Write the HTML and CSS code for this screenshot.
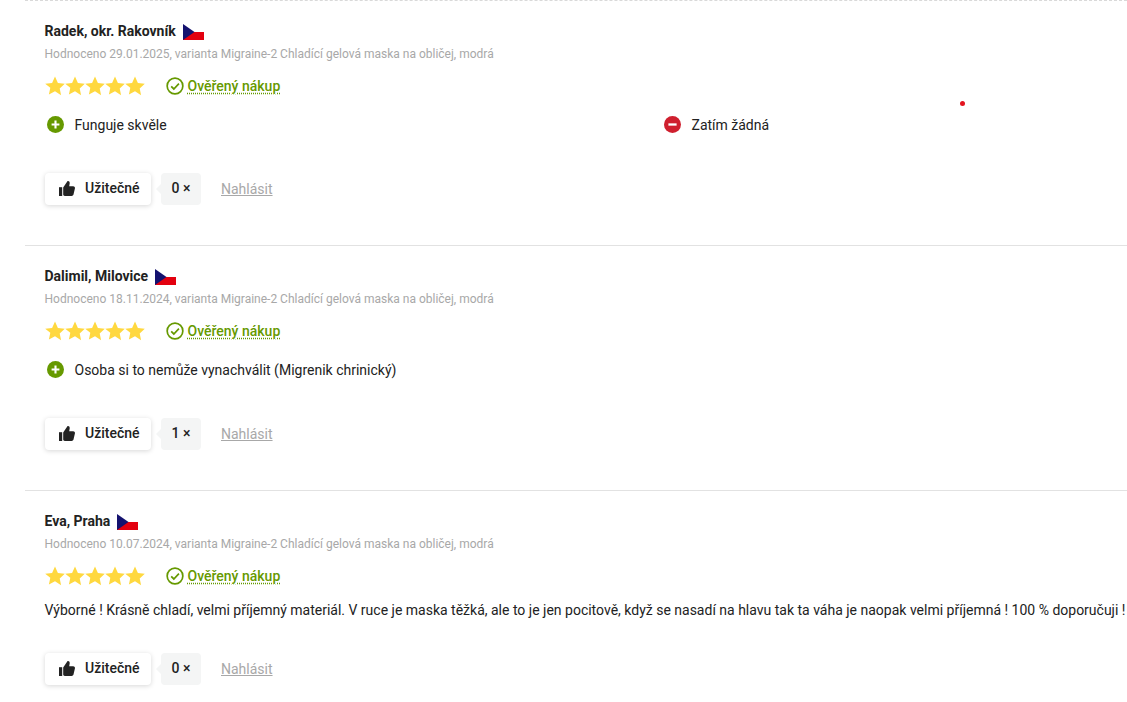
FILE: index.html
```
<!DOCTYPE html>
<html lang="cs">
<head>
<meta charset="utf-8">
<title>Hodnocení</title>
<link rel="stylesheet" href="styles.css">
</head>
<body>
<svg class="defs" width="0" height="0" aria-hidden="true">
  <defs>
    <symbol id="flag" viewBox="0 0 21 16">
      <rect width="21" height="8" y="0" fill="#fff"/>
      <rect width="21" height="8" y="8" fill="#e3000f"/>
      <path d="M0 0 L11.5 8 L0 16 Z" fill="#14126f"/>
    </symbol>
    <symbol id="star" viewBox="0 0 20 20">
      <path d="M10 .6l2.9 6.3 6.9.8-5.1 4.7 1.4 6.8L10 15.2l-6.1 3.4 1.4-6.8L.2 7.7l6.9-.8z" fill="#ffd83f"/>
    </symbol>
    <symbol id="check" viewBox="0 0 17 17">
      <circle cx="8.5" cy="8.5" r="7.4" fill="none" stroke="#669900" stroke-width="1.6"/>
      <path d="M4.9 8.8l2.5 2.5 4.8-5" fill="none" stroke="#669900" stroke-width="1.6"/>
    </symbol>
    <symbol id="plus" viewBox="0 0 17 17">
      <circle cx="8.5" cy="8.5" r="8.5" fill="#669900"/>
      <path d="M8.5 4.6v7.8M4.6 8.5h7.8" stroke="#fff" stroke-width="2.1"/>
    </symbol>
    <symbol id="minus" viewBox="0 0 17 17">
      <circle cx="8.5" cy="8.5" r="8.5" fill="#cf1f2e"/>
      <path d="M4.4 8.5h8.2" stroke="#fff" stroke-width="2.3"/>
    </symbol>
    <symbol id="thumb" viewBox="0 0 16 15">
      <path d="M0 6.2h3.2V15H0z" fill="#222"/>
      <path d="M4.2 6.4L8.6.1c1.4-.3 2.3.8 2.1 2.2l-.5 3h4c1.2 0 2 1 1.7 2.1l-1.4 6.2c-.2.9-1 1.4-1.9 1.4H5.8c-.9 0-1.6-.6-1.6-1.4z" fill="#222"/>
    </symbol>
  </defs>
</svg>

<main class="reviews">
  <article class="review">
    <h3 class="author">Radek, okr. Rakovník <svg class="flag"><use href="#flag"/></svg></h3>
    <p class="meta">Hodnoceno 29.01.2025, varianta Migraine-2 Chladící gelová maska na obličej, modrá</p>
    <div class="rating">
      <div class="stars"><svg class="star"><use href="#star"/></svg><svg class="star"><use href="#star"/></svg><svg class="star"><use href="#star"/></svg><svg class="star"><use href="#star"/></svg><svg class="star"><use href="#star"/></svg></div>
      <a class="verified" href="#"><svg class="check"><use href="#check"/></svg><span>Ověřený nákup</span></a>
    </div>
    <div class="points">
      <div class="point"><svg class="sign"><use href="#plus"/></svg>Funguje skvěle</div>
      <div class="point"><svg class="sign"><use href="#minus"/></svg>Zatím žádná</div>
    </div>
    <div class="actions">
      <button class="useful"><svg class="thumb"><use href="#thumb"/></svg>Užitečné</button>
      <span class="count">0 ×</span>
      <a class="report" href="#">Nahlásit</a>
    </div>
  </article>

  <article class="review">
    <h3 class="author">Dalimil, Milovice <svg class="flag"><use href="#flag"/></svg></h3>
    <p class="meta">Hodnoceno 18.11.2024, varianta Migraine-2 Chladící gelová maska na obličej, modrá</p>
    <div class="rating">
      <div class="stars"><svg class="star"><use href="#star"/></svg><svg class="star"><use href="#star"/></svg><svg class="star"><use href="#star"/></svg><svg class="star"><use href="#star"/></svg><svg class="star"><use href="#star"/></svg></div>
      <a class="verified" href="#"><svg class="check"><use href="#check"/></svg><span>Ověřený nákup</span></a>
    </div>
    <div class="points">
      <div class="point"><svg class="sign"><use href="#plus"/></svg>Osoba si to nemůže vynachválit (Migrenik chrinický)</div>
    </div>
    <div class="actions">
      <button class="useful"><svg class="thumb"><use href="#thumb"/></svg>Užitečné</button>
      <span class="count">1 ×</span>
      <a class="report" href="#">Nahlásit</a>
    </div>
  </article>

  <article class="review review-text">
    <h3 class="author">Eva, Praha <svg class="flag"><use href="#flag"/></svg></h3>
    <p class="meta">Hodnoceno 10.07.2024, varianta Migraine-2 Chladící gelová maska na obličej, modrá</p>
    <div class="rating">
      <div class="stars"><svg class="star"><use href="#star"/></svg><svg class="star"><use href="#star"/></svg><svg class="star"><use href="#star"/></svg><svg class="star"><use href="#star"/></svg><svg class="star"><use href="#star"/></svg></div>
      <a class="verified" href="#"><svg class="check"><use href="#check"/></svg><span>Ověřený nákup</span></a>
    </div>
    <p class="text">Výborné ! Krásně chladí, velmi příjemný materiál. V ruce je maska těžká, ale to je jen pocitově, když se nasadí na hlavu tak ta váha je naopak velmi příjemná ! 100 % doporučuji !</p>
    <div class="actions">
      <button class="useful"><svg class="thumb"><use href="#thumb"/></svg>Užitečné</button>
      <span class="count">0 ×</span>
      <a class="report" href="#">Nahlásit</a>
    </div>
  </article>
</main>
<span class="dot"></span>
</body>
</html>
```
FILE: styles.css
```
html, body { margin: 0; padding: 0; background: #fff; overflow: hidden; }
body { font-family: Roboto, "Liberation Sans", sans-serif; font-size: 14px; color: #222; height: 702px; position: relative; }
.defs { position: absolute; }
.reviews { margin-left: 25px; border-top: 1px dashed #d9d9d9; }
.review { height: 245px; padding: 21px 0 0 20px; box-sizing: border-box; border-bottom: 1px solid #e2e2e2; }
.review:last-child { border-bottom: 0; }
.author { margin: 0 0 0 -.5px; height: 18px; font-size: 14px; line-height: 18px; font-weight: 700; color: #222; display: flex; align-items: center; gap: 7px; }
.flag { width: 21px; height: 16px; display: block; margin-top: 2px; }
.meta { margin: 6px 0 0 -.5px; font-size: 12px; line-height: 16px; color: #a8a8a8; }
.rating { display: flex; align-items: center; margin-top: 14px; height: 20px; }
.stars { display: flex; }
.star { width: 20px; height: 20px; display: block; }
.verified { display: flex; align-items: center; gap: 3.5px; margin-left: 21px; color: #669900; font-weight: 500; text-decoration: none; }
.verified span { text-decoration: underline dotted; text-underline-offset: 2px; }
.check { width: 18px; height: 18px; display: block; }
.points { display: grid; grid-template-columns: 617px 1fr; margin-top: 20px; height: 18px; }
.point { display: flex; align-items: center; line-height: 18px; padding-left: 2px; }
.sign { width: 17px; height: 17px; margin-right: 10.5px; display: block; margin-top: -2px; }
.text { margin: 15px 0 0 -.5px; line-height: 18px; white-space: nowrap; height: 18px; }
.actions { display: flex; align-items: center; margin-top: 39px; height: 32px; }
.review-text .actions { margin-top: 34px; }
.useful { display: flex; align-items: center; gap: 10px; height: 32px; width: 106px; padding: 0 0 2px 14px; box-sizing: border-box; border: 0; border-radius: 4px; background: #fff; box-shadow: 0 1px 5px rgba(0,0,0,.16); font-family: inherit; font-size: 14px; font-weight: 500; color: #222; }
.thumb { width: 16px; height: 15px; display: block; }
.count { position: relative; display: flex; align-items: center; justify-content: center; width: 40px; height: 32px; padding-bottom: 2px; box-sizing: border-box; margin-left: 10px; border-radius: 4px; background: #f4f5f5; font-weight: 500; }
.count::before { content: ""; position: absolute; left: -5px; top: 11px; border-style: solid; border-width: 5px 5px 5px 0; border-color: transparent #f4f5f5 transparent transparent; }
.report { margin-left: 20px; color: #a8a8a8; font-weight: 400; text-decoration: underline; }
.dot { position: absolute; left: 960px; top: 101px; width: 5px; height: 5px; border-radius: 50%; background: #e3141f; }
```
